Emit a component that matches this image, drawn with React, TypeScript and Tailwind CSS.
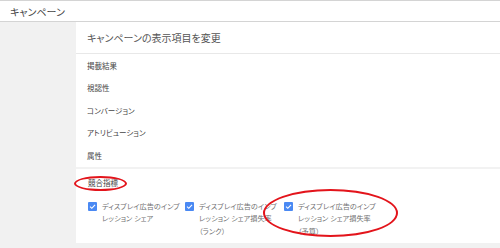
const sections = ['掲載結果', '視認性', 'コンバージョン', 'アトリビューション', '属性'];

const metrics = [
  ['ディスプレイ広告のインプ', 'レッション シェア'],
  ['ディスプレイ広告のインプ', 'レッション シェア損失率', '（ランク）'],
  ['ディスプレイ広告のインプ', 'レッション シェア損失率', '（予算）'],
];

function Check() {
  return (
    <span className="mt-[2px] flex h-[9px] w-[9px] shrink-0 items-center justify-center rounded-[1px] bg-[#4a89f3]">
      <svg width="7" height="7" viewBox="0 0 10 10">
        <path d="M1.5 5.2 L4 7.6 L8.6 2.6" fill="none" stroke="#fff" strokeWidth="1.6" />
      </svg>
    </span>
  );
}

export default function App() {
  return (
    <div
      className="relative h-[248px] w-[500px] overflow-hidden bg-[#f1f1f1] [font-feature-settings:'palt']"
      style={{ fontFamily: '"Noto Sans CJK JP", "Noto Sans", sans-serif' }}
    >
      {/* top bar */}
      <div className="flex h-[22px] items-center border-t border-b border-[#d4d4d4] bg-white pl-[10px] text-[10px] text-[#444]">
        キャンペーン
      </div>

      <div className="flex">
        <div className="w-[76px] shrink-0" />
        <div className="h-[221px] flex-1 bg-white">
          <div className="flex h-[32px] items-center border-b border-[#e8e8e8] pl-[11px] text-[10px] text-[#555]">
            キャンペーンの表示項目を変更
          </div>
          {sections.map((s) => (
            <div key={s} className="flex h-[22.5px] items-center pl-[11px] text-[7.5px] text-[#444]">
              {s}
            </div>
          ))}
          <div className="h-[2px] bg-[#f2f2f2]" />
          <div className="flex h-[28px] items-center pl-[12px] text-[7.5px] text-[#444]">競合指標</div>
          <div className="flex pl-[12px] pt-[3px]">
            {metrics.map((lines, i) => (
              <div key={i} className={`flex gap-[5px] ${i === 0 ? 'w-[97px]' : 'w-[99px]'}`}>
                <Check />
                <div className="text-[7.2px] leading-[12.5px] text-[#707070]">
                  {lines.map((l) => (
                    <div key={l} className="whitespace-nowrap">{l}</div>
                  ))}
                </div>
              </div>
            ))}
          </div>
        </div>
      </div>

      {/* red annotation ellipses */}
      <div className="absolute left-[74px] top-[176px] h-[15px] w-[53px] rounded-[50%] border-2 border-[#e3141b]" />
      <div className="absolute left-[263px] top-[189px] h-[48px] w-[135px] rounded-[50%] border-2 border-[#e3141b]" />
    </div>
  );
}
